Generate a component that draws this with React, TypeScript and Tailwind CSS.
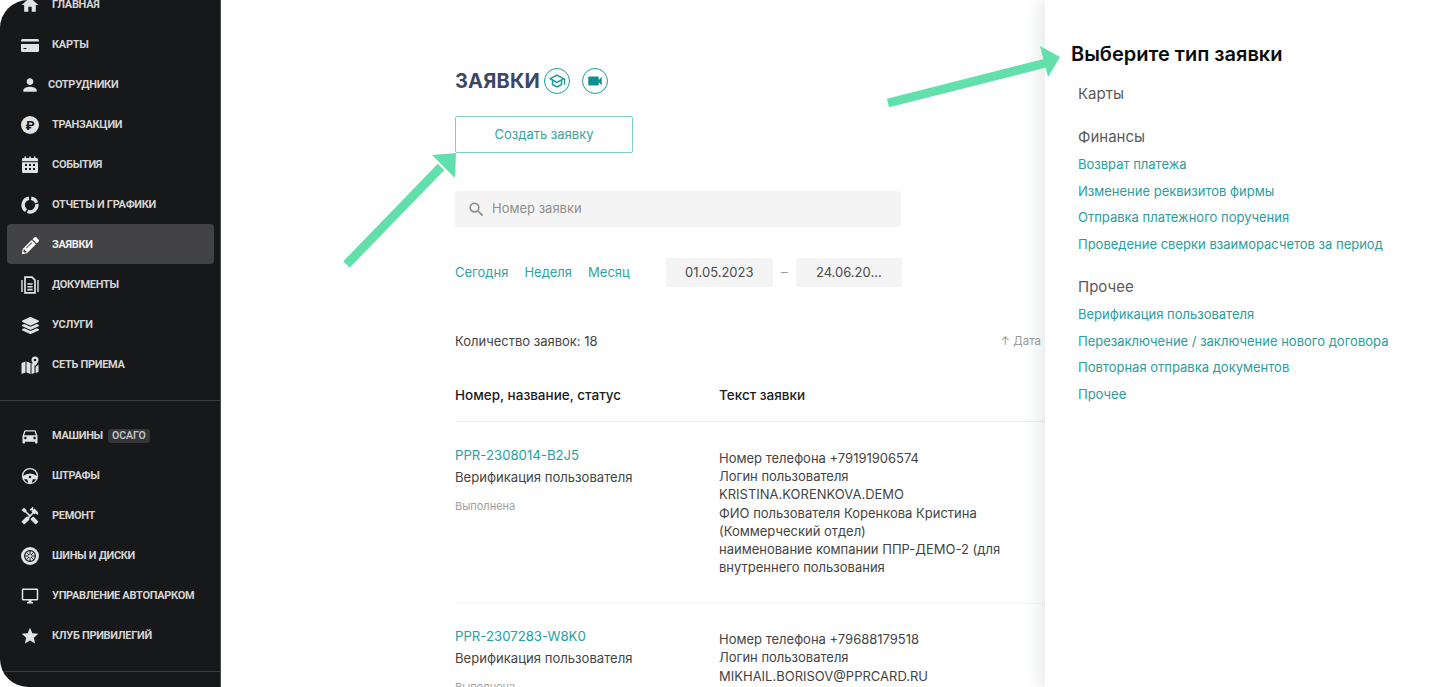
import React from 'react';
import {
  MdHome,
  MdPerson,
  MdDirectionsCar,
  MdHandyman,
  MdOutlineDesktopWindows,
  MdStar,
  MdSearch,
  MdVideocam,
  MdOutlineSchool,
} from 'react-icons/md';
import { FaPencilAlt, FaLayerGroup } from 'react-icons/fa';
import { PiSteeringWheelFill } from 'react-icons/pi';

const RubleIcon = () => (
  <div className="w-[18px] h-[18px] rounded-full bg-[#e2e2e2] flex items-center justify-center text-[#17181a] text-[13px] font-bold leading-none">₽</div>
);

const CardIcon = () => (
  <svg viewBox="0 0 18 13" className="w-[18px] h-[13px]" fill="#e2e2e2">
    <rect width="18" height="13" rx="1.5" />
    <path d="M0 2.6h18v2.4H0z" fill="#17181a" />
    <path d="M2.5 9h3v1h-3z" fill="#17181a" />
  </svg>
);

const CalendarIcon = () => (
  <svg viewBox="0 0 18 18" className="w-[18px] h-[18px]" fill="#e2e2e2">
    <path d="M3.5 0.5h1.6v2H3.5zM8.2 0.5h1.6v2H8.2zM12.9 0.5h1.6v2h-1.6z" />
    <rect x="1" y="2" width="16" height="15" rx="1.5" />
    <path d="M1 5.2h16v1H1z" fill="#17181a" />
    <path d="M4 8h2v2H4zM8 8h2v2H8zM12 8h2v2h-2zM4 12h2v2H4zM8 12h2v2H8zM12 12h2v2h-2z" fill="#17181a" />
  </svg>
);

const DonutIcon = () => (
  <svg viewBox="0 0 18 18" className="w-[18px] h-[18px]" fill="none" stroke="#e2e2e2" strokeWidth="3.4">
    <path d="M8 2.2A6.9 6.9 0 0 0 5 14.6" />
    <path d="M6.5 15.4A6.9 6.9 0 0 0 15.8 8" />
    <path d="M15.6 6.8A6.9 6.9 0 0 0 10.2 2.2" />
  </svg>
);

const DocIcon = () => (
  <svg viewBox="0 0 18 18" className="w-[18px] h-[18px]" fill="none" stroke="#e2e2e2">
    <path d="M4 1.2h7l3 3v12.6H4z" strokeWidth="1.7" />
    <path d="M6.4 8h5.2M6.4 10.8h5.2M6.4 13.6h5.2" strokeWidth="1.6" />
    <path d="M1 4v12M17 4v12" strokeWidth="1.4" />
  </svg>
);

const MapIcon = () => (
  <svg viewBox="0 0 18 18" className="w-[18px] h-[18px]" fill="#e2e2e2">
    <path d="M0.5 7l4-1.5v11l-4 1.5zM5.5 5.5l4 1.5v11l-4-1.5zM10.5 7l3 1.2v8.8l-3 1z" />
    <path d="M14 0.5a3.5 3.5 0 0 1 3.5 3.5c0 2.5-3.5 6-3.5 6s-3.5-3.5-3.5-6A3.5 3.5 0 0 1 14 0.5z" />
    <circle cx="14" cy="4" r="1.3" fill="#17181a" />
    <path d="M14.6 11l2.9-2.4V16l-2.9 1z" />
  </svg>
);

const TireIcon = () => (
  <svg viewBox="0 0 18 18" className="w-[18px] h-[18px]">
    <circle cx="9" cy="9" r="9" fill="#e2e2e2" />
    <circle cx="9" cy="9" r="5.4" fill="none" stroke="#17181a" strokeWidth="1.1" />
    <path d="M9 3.6v10.8M3.6 9h10.8M5.2 5.2l7.6 7.6M12.8 5.2l-7.6 7.6" stroke="#17181a" strokeWidth="1" />
    <circle cx="9" cy="9" r="1.5" fill="#e2e2e2" />
  </svg>
);

const ic = 'w-[20px] h-[20px] text-[#e2e2e2]';

const mainNav = [
  { icon: <MdHome className="w-[22px] h-[22px] text-[#e2e2e2]" />, label: 'Главная' },
  { icon: <CardIcon />, label: 'Карты' },
  { icon: <MdPerson className="w-[22px] h-[22px] text-[#e2e2e2]" />, label: 'Сотрудники', tight: true },
  { icon: <RubleIcon />, label: 'Транзакции' },
  { icon: <CalendarIcon />, label: 'События' },
  { icon: <DonutIcon />, label: 'Отчеты и графики' },
  { icon: <FaPencilAlt className="w-[17px] h-[17px] text-white" />, label: 'Заявки', active: true },
  { icon: <DocIcon />, label: 'Документы' },
  { icon: <FaLayerGroup className="w-[17px] h-[17px] text-[#e2e2e2]" />, label: 'Услуги' },
  { icon: <MapIcon />, label: 'Сеть приема' },
];

const carNav = [
  { icon: <MdDirectionsCar className="w-[22px] h-[22px] text-[#e2e2e2]" />, label: 'Машины', badge: 'ОСАГО' },
  { icon: <PiSteeringWheelFill className={ic} />, label: 'Штрафы' },
  { icon: <MdHandyman className={ic} />, label: 'Ремонт' },
  { icon: <TireIcon />, label: 'Шины и диски' },
  { icon: <MdOutlineDesktopWindows className="w-[18px] h-[18px] text-[#e2e2e2]" />, label: 'Управление автопарком' },
  { icon: <MdStar className="w-[22px] h-[22px] text-[#e2e2e2]" />, label: 'Клуб привилегий' },
];

type NavEntry = {
  icon: React.ReactNode;
  label: string;
  active?: boolean;
  tight?: boolean;
  badge?: string;
};

function NavItem({ item }: { item: NavEntry }) {
  return (
    <div className={`h-10 pt-[2px] ml-[7px] mr-[6px] rounded-[4px] flex items-center ${item.active ? 'bg-[#434345]' : ''}`}>
      <div className="w-[45px] pl-[13px] shrink-0 flex items-center">
        <div className="w-[20px] flex items-center justify-center">{item.icon}</div>
      </div>
      <span className={`text-[11px] font-bold uppercase tracking-[-0.3px] whitespace-nowrap ${item.active ? 'text-[#f0f0f0]' : 'text-[#d4d4d4]'} ${item.tight ? '-ml-[4px]' : ''}`}>
        {item.label}
      </span>
      {item.badge && (
        <span className="ml-[5px] px-[4px] h-[14px] flex items-center rounded-[3px] bg-[#343537] text-[#c4c4c4] text-[10.5px] font-semibold">
          {item.badge}
        </span>
      )}
    </div>
  );
}

const rows = [
  {
    id: 'PPR-2308014-B2J5',
    lines: [
      'Номер телефона +79191906574',
      'Логин пользователя',
      'KRISTINA.KORENKOVA.DEMO',
      'ФИО пользователя Коренкова Кристина',
      '(Коммерческий отдел)',
      'наименование компании ППР-ДЕМО-2 (для',
      'внутреннего пользования',
    ],
  },
  {
    id: 'PPR-2307283-W8K0',
    lines: ['Номер телефона +79688179518', 'Логин пользователя', 'MIKHAIL.BORISOV@PPRCARD.RU'],
  },
];

const groups = [
  {
    title: 'Финансы',
    links: ['Возврат платежа', 'Изменение реквизитов фирмы', 'Отправка платежного поручения', 'Проведение сверки взаиморасчетов за период'],
  },
  {
    title: 'Прочее',
    links: ['Верификация пользователя', 'Перезаключение / заключение нового договора', 'Повторная отправка документов', 'Прочее'],
  },
];

export default function App() {
  return (
    <div className="relative w-[1449px] h-[687px] overflow-hidden bg-white flex font-['Inter',sans-serif] text-[13px]">
      {/* Сайдбар */}
      <aside className="w-[221px] h-full shrink-0 bg-[#17181a] border-r border-[#4a4b4d] rounded-l-[28px] overflow-hidden font-['Roboto',sans-serif]">
        <div className="-mt-4">
          {mainNav.map((item) => (
            <NavItem key={item.label} item={item} />
          ))}
        </div>
        <div className="mt-4 border-t border-[#3d3e40] pt-[14px]">
          {carNav.map((item) => (
            <NavItem key={item.label} item={item} />
          ))}
        </div>
        <div className="mt-4 border-t border-[#3d3e40]" />
      </aside>

      {/* Контент */}
      <main className="flex-1 min-w-0 pl-[234px] pt-[68px]">
        <div className="flex items-center h-[26px]">
          <h1 className="text-[20px] font-bold tracking-[0.2px] text-[#3e4668] leading-none">ЗАЯВКИ</h1>
          <div className="ml-[4px] w-[26px] h-[26px] rounded-full border border-[#1c9c9c] flex items-center justify-center">
            <MdOutlineSchool className="w-[18px] h-[18px] text-[#1c9c9c]" />
          </div>
          <div className="ml-[12px] w-[26px] h-[26px] rounded-full border border-[#1c9c9c] flex items-center justify-center">
            <MdVideocam className="w-[18px] h-[18px] text-[#0f9090]" />
          </div>
        </div>

        <button className="mt-[22px] block w-[178px] h-[37px] rounded-[2px] border border-[#7fcfcf] text-[#35a5a5] text-[13px]">
          Создать заявку
        </button>

        <div className="mt-[38px] w-[446px] h-[36px] rounded-[2px] bg-[#f4f4f4] flex items-center pl-[12px] gap-[6px] text-[#8f8f8f]">
          <MdSearch className="w-[19px] h-[19px] text-[#8a8a8a]" />
          <span>Номер заявки</span>
        </div>

        <div className="mt-[31px] flex items-center h-[29px] w-[447px]">
          <div className="flex gap-[16px] text-[#2fa3a3]">
            <span>Сегодня</span>
            <span>Неделя</span>
            <span>Месяц</span>
          </div>
          <div className="ml-[36px] w-[107px] h-[29px] rounded-[3px] bg-[#f4f4f4] flex items-center justify-center text-[#4a4a4a]">01.05.2023</div>
          <span className="w-[23px] text-center text-[#9a9a9a]">–</span>
          <div className="w-[106px] h-[29px] rounded-[3px] bg-[#f4f4f4] flex items-center justify-center text-[#4a4a4a]">24.06.20...</div>
        </div>

        <div className="mt-[46px] w-[586px] h-[18px] flex items-center justify-between text-[#444]">
          <span>Количество заявок: 18</span>
          <span className="text-[#9a9a9a] text-[11.5px] whitespace-nowrap">↑ Дата</span>
        </div>

        <div className="mt-[34px] h-[18px] grid grid-cols-[264px_1fr] text-[13.5px] font-medium text-[#1c1c1c]">
          <span>Номер, название, статус</span>
          <span>Текст заявки</span>
        </div>
        <div className="mt-[18px] border-t border-[#ececec]" />

        {rows.map((row) => (
          <div key={row.id} className="grid grid-cols-[264px_1fr] pt-[24px] last:pt-[23px] pb-[26.7px] border-b border-[#f3f3f3]">
            <div>
              <div className="text-[#22a0a0] text-[13.2px] leading-[19px]">{row.id}</div>
              <div className="mt-[3px] text-[#444] text-[13.1px] leading-[18px]">Верификация пользователя</div>
              <div className="mt-[12px] text-[#a0a0a0] text-[11px] leading-[16px]">Выполнена</div>
            </div>
            <div className="pt-[3px] text-[#444] leading-[18.2px] whitespace-nowrap">
              {row.lines.map((line) => (
                <div key={line}>{line}</div>
              ))}
            </div>
          </div>
        ))}
      </main>

      {/* Выезжающая панель */}
      <div className="absolute top-0 right-0 w-[404px] h-full bg-white shadow-[-6px_0_14px_rgba(60,90,80,0.12)] pl-[26px] pt-[42px]">
        <h2 className="text-[20px] font-semibold text-[#0c0c0c] leading-[24px]">Выберите тип заявки</h2>
        <div className="pl-[7px]">
          <div className="mt-[18px] text-[15px] leading-[20px] text-[#5a5a5a]">Карты</div>
          <div className="mt-[23px]">
            <div className="text-[15px] leading-[20px] text-[#5a5a5a]">{groups[0].title}</div>
            <div className="mt-[8px] flex flex-col gap-[8.7px]">
              {groups[0].links.map((link) => (
                <span key={link} className="leading-[18px] text-[#2a9d9d]">{link}</span>
              ))}
            </div>
          </div>
          <div className="mt-[24px]">
            <div className="text-[15px] leading-[20px] text-[#5a5a5a]">{groups[1].title}</div>
            <div className="mt-[8px] flex flex-col gap-[8.7px]">
              {groups[1].links.map((link) => (
                <span key={link} className="leading-[18px] text-[#2a9d9d]">{link}</span>
              ))}
            </div>
          </div>
        </div>
      </div>

      {/* Стрелки-указатели */}
      <svg className="absolute inset-0 pointer-events-none" width="1449" height="687" viewBox="0 0 1449 687">
        <path d="M346.5 264.5L441 167" stroke="#62e0ab" strokeWidth="9" fill="none" />
        <path d="M456 153L432 155L455 178Z" fill="#62e0ab" />
        <path d="M888 103L1046 63" stroke="#62e0ab" strokeWidth="9" fill="none" />
        <path d="M1060 57L1040 46L1048 77Z" fill="#62e0ab" />
      </svg>
    </div>
  );
}
